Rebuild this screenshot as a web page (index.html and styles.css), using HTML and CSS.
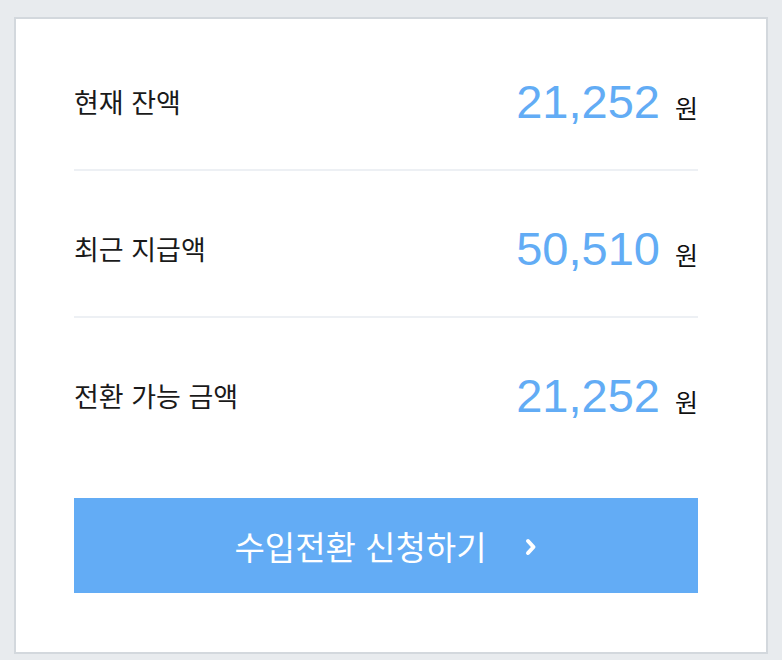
FILE: index.html
```html
<!DOCTYPE html>
<html lang="ko">
<head>
<meta charset="utf-8">
<link rel="stylesheet" href="styles.css">
</head>
<body>
<div class="card">
  <div class="row">
    <span class="label">현재 잔액</span>
    <span class="value"><span class="num">21,252</span><span class="unit">원</span></span>
  </div>
  <div class="row">
    <span class="label">최근 지급액</span>
    <span class="value"><span class="num">50,510</span><span class="unit">원</span></span>
  </div>
  <div class="row last">
    <span class="label">전환 가능 금액</span>
    <span class="value"><span class="num">21,252</span><span class="unit">원</span></span>
  </div>
  <button class="btn" type="button">
    <span class="btn-text">수입전환 신청하기</span>
    <svg class="chev" width="14" height="20" viewBox="0 0 14 20"><polyline points="4,4 9.5,10 4,16" fill="none" stroke="#fff" stroke-width="4" stroke-linecap="round" stroke-linejoin="round"/></svg>
  </button>
</div>
</body>
</html>
```
FILE: styles.css
```css
html, body {
  margin: 0;
  padding: 0;
  background: #e8ebee;
}
body {
  padding: 17px 14px 11px 14px;
  font-family: "Noto Sans CJK KR", "Noto Sans", sans-serif;
}
.card {
  height: 628px;
  background: #fff;
  border: 2px solid #d3d8dd;
  padding: 5px 68px 0 58px;
  box-sizing: content-box;
  width: 624px;
}
.row {
  display: flex;
  justify-content: space-between;
  align-items: center;
  height: 136px;
  padding-top: 9px;
  border-bottom: 2px solid #edf0f4;
}
.row.last {
  border-bottom: none;
}
.label {
  font-size: 27px;
  color: #1a1a1a;
}
.value {
  display: flex;
  align-items: baseline;
}
.num {
  font-family: "Liberation Sans", Arial, sans-serif;
  font-size: 47px;
  color: #62acf5;
  line-height: 1;
}
.unit {
  font-size: 25px;
  color: #111;
  margin-left: 15px;
}
.btn {
  display: flex;
  align-items: center;
  justify-content: center;
  width: 100%;
  height: 95px;
  margin-top: 35px;
  border: none;
  background: #63acf5;
  color: #fff;
  font-family: "Noto Sans CJK KR", "Noto Sans", sans-serif;
  font-size: 33px;
  padding: 0;
}
.chev {
  margin-left: 37px;
  margin-top: 2px;
}
```
